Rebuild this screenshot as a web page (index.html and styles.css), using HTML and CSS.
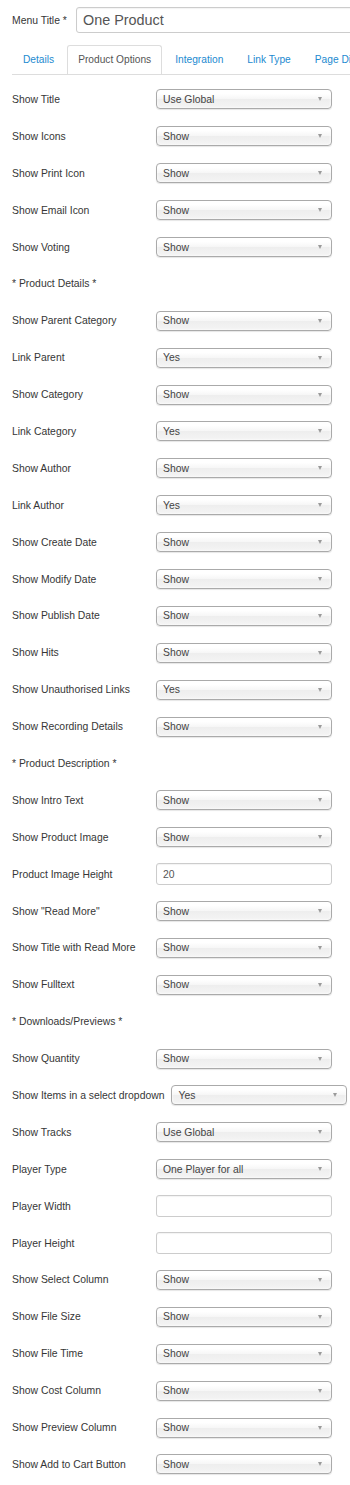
FILE: index.html
```html
<!doctype html>

<html lang="en">
<head>
	<meta charset="utf-8">

	<title>Menu Item: Product Options</title>

	<link rel="stylesheet" href="styles.css">
</head>

<body>
	<div class="title-row">
		<label class="title-label">Menu Title *</label>
		<input class="title-input" type="text" value="One Product">
	</div>

	<ul class="nav-tabs">
		<li><a href="#details">Details</a></li>
		<li class="active"><a href="#options">Product Options</a></li>
		<li><a href="#integration">Integration</a></li>
		<li><a href="#linktype">Link Type</a></li>
		<li><a href="#display">Page Display</a></li>
		<li><a href="#metadata">Metadata</a></li>
	</ul>

	<div class="form" id="form"></div>

	<script>
		/* rows: [label, value, type] - type 's' select, 'i' input, 'h' heading */
		var rows = [
			['Show Title', 'Use Global', 's'],
			['Show Icons', 'Show', 's'],
			['Show Print Icon', 'Show', 's'],
			['Show Email Icon', 'Show', 's'],
			['Show Voting', 'Show', 's'],
			['* Product Details *', '', 'h'],
			['Show Parent Category', 'Show', 's'],
			['Link Parent', 'Yes', 's'],
			['Show Category', 'Show', 's'],
			['Link Category', 'Yes', 's'],
			['Show Author', 'Show', 's'],
			['Link Author', 'Yes', 's'],
			['Show Create Date', 'Show', 's'],
			['Show Modify Date', 'Show', 's'],
			['Show Publish Date', 'Show', 's'],
			['Show Hits', 'Show', 's'],
			['Show Unauthorised Links', 'Yes', 's'],
			['Show Recording Details', 'Show', 's'],
			['* Product Description *', '', 'h'],
			['Show Intro Text', 'Show', 's'],
			['Show Product Image', 'Show', 's'],
			['Product Image Height', '20', 'i'],
			['Show "Read More"', 'Show', 's'],
			['Show Title with Read More', 'Show', 's'],
			['Show Fulltext', 'Show', 's'],
			['* Downloads/Previews *', '', 'h'],
			['Show Quantity', 'Show', 's'],
			['Show Items in a select dropdown', 'Yes', 's'],
			['Show Tracks', 'Use Global', 's'],
			['Player Type', 'One Player for all', 's'],
			['Player Width', '', 'i'],
			['Player Height', '', 'i'],
			['Show Select Column', 'Show', 's'],
			['Show File Size', 'Show', 's'],
			['Show File Time', 'Show', 's'],
			['Show Cost Column', 'Show', 's'],
			['Show Preview Column', 'Show', 's'],
			['Show Add to Cart Button', 'Show', 's']
		];

		var $form = document.getElementById('form');

		rows.forEach(function(row) {
			var $group = document.createElement('div');
			$group.className = 'control-group';

			var $label = document.createElement('label');
			$label.className = 'control-label';
			$label.textContent = row[0];
			$group.appendChild($label);

			if (row[2] === 's') {
				var $select = document.createElement('a');
				$select.className = 'chzn-single';
				$select.innerHTML = '<span></span><b class="caret"></b>';
				$select.firstChild.textContent = row[1];
				$group.appendChild($select);
			} else if (row[2] === 'i') {
				var $input = document.createElement('input');
				$input.className = 'text-input';
				$input.type = 'text';
				$input.value = row[1];
				$group.appendChild($input);
			}

			$form.appendChild($group);
		});
	</script>
</body>
</html>
```

FILE: styles.css
```css
* { box-sizing: border-box; }

html,
body {
	background: #fff;
	margin: 0;
	padding: 0;
	overflow-x: hidden;
}

body {
	color: #363636;
	font-family: "Liberation Sans", Arial, sans-serif;
	font-size: 10.4px;
}

/* title */
.title-row {
	align-items: center;
	display: flex;
	padding: 7px 0 0 12px;
	white-space: nowrap;
}

.title-label {
	width: 64px;
	flex: 0 0 auto;
}

.title-input {
	border: 1px solid #ccc;
	border-radius: 3px;
	box-shadow: inset 0 1px 1px rgba(0,0,0,0.05);
	color: #555;
	flex: 0 0 auto;
	font-family: inherit;
	font-size: 14.4px;
	height: 26px;
	margin: 0;
	padding: 0 6px;
	width: 300px;
}

/* tabs */
.nav-tabs {
	border-bottom: 1px solid #ddd;
	display: flex;
	font-size: 10.2px;
	list-style: none;
	margin: 12px 0 0 12px;
	overflow: hidden;
	padding: 0;
	white-space: nowrap;
}

.nav-tabs li {
	flex: 0 0 auto;
	margin: 0 2px -1px 0;
}

.nav-tabs a {
	border: 1px solid transparent;
	border-radius: 3px 3px 0 0;
	color: #1c8ad0;
	display: block;
	height: 30px;
	line-height: 28px;
	padding: 0 10px;
	text-decoration: none;
}

.nav-tabs .active a {
	background: #fff;
	border-color: #ddd #ddd transparent;
	color: #555;
}

/* form rows */
.form {
	padding: 6px 0 0 12px;
}

.control-group {
	align-items: center;
	display: flex;
	height: 36.9px;
	white-space: nowrap;
}

.control-label {
	flex: 0 0 auto;
	min-width: 144px;
	padding-right: 7px;
}

.chzn-single {
	background: linear-gradient(to bottom, #fff 20%, #f6f6f6 50%, #eee 52%, #f4f4f4 100%);
	border: 1px solid #aaa;
	border-radius: 4px;
	box-shadow: 0 0 3px #fff inset, 0 1px 1px rgba(0,0,0,0.1);
	color: #444;
	display: flex;
	align-items: center;
	flex: 0 0 auto;
	height: 20px;
	padding: 0 0 0 6px;
	position: relative;
	width: 176px;
}

.chzn-single span {
	flex: 1 1 auto;
	overflow: hidden;
}

.chzn-single .caret {
	border-left: 2.5px solid transparent;
	border-right: 2.5px solid transparent;
	border-top: 4px solid #9a9a9a;
	height: 0;
	margin-right: 9px;
	width: 0;
}

.text-input {
	border: 1px solid #ccc;
	border-radius: 3px;
	box-shadow: inset 0 1px 1px rgba(0,0,0,0.05);
	color: #555;
	flex: 0 0 auto;
	font-family: inherit;
	font-size: 10.4px;
	height: 22px;
	margin: 0;
	padding: 0 6px;
	width: 176px;
}
```
